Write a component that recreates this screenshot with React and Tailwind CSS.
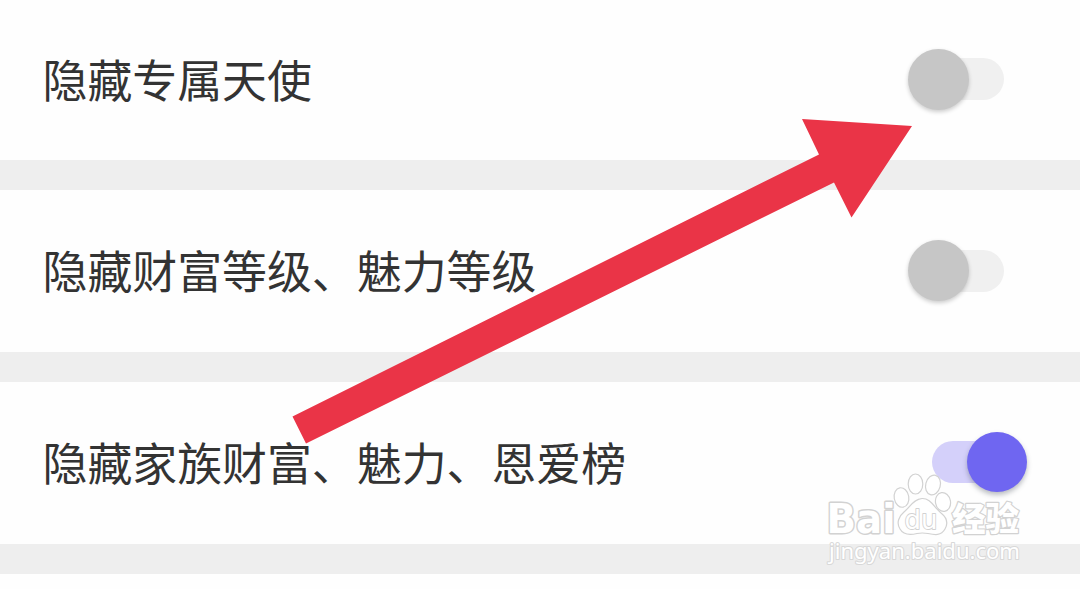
function Toggle({ on }) {
  if (on) {
    return (
      <div className="mr-[53px] flex h-[60px] w-24 items-center justify-end">
        <div className="-mr-[30px] h-[42px] w-[65px] rounded-l-full bg-[#d4d0fa]" />
        <div className="z-10 size-[60px] shrink-0 rounded-full bg-[#6f66f1] shadow-[0_3px_5px_rgba(60,70,80,0.35)]" />
      </div>
    );
  }
  return (
    <div className="mr-[76px] flex h-[60px] w-24 items-center">
      <div className="z-10 size-[61px] shrink-0 rounded-full bg-[#c6c6c6] shadow-[0_2px_4px_rgba(0,0,0,0.2)]" />
      <div className="-ml-[30px] h-[42px] w-[65px] rounded-r-full bg-[#f0f0f0]" />
    </div>
  );
}

function Row({ label, on, className }) {
  return (
    <div className={`flex shrink-0 items-center justify-between pl-[42.5px] ${className}`}>
      <span className="whitespace-nowrap text-[44.9px] leading-none text-[#333333]">{label}</span>
      <Toggle on={on} />
    </div>
  );
}

function Divider() {
  return <div className="h-[30px] shrink-0 bg-[#eeeeee]" />;
}

function Arrow() {
  return (
    <svg className="absolute inset-0 z-20" width="1080" height="589" viewBox="0 0 1080 589">
      <polygon points="292.5,416.5 819,154.5 802,119 912,126 851.5,217.5 834,182.5 306,443.5" fill="#ea3447" />
    </svg>
  );
}

function Watermark() {
  return (
    <svg
      className="absolute left-[820px] top-[465px] z-30"
      width="220"
      height="110"
      viewBox="820 465 220 110"
      fill="#ffffff"
      stroke="#d2d2d2"
      strokeWidth="1.2"
      strokeLinejoin="round"
    >
      <text x="826.5" y="533" fontFamily="'DejaVu Sans', sans-serif" fontWeight="700" fontSize="40" textLength="69" lengthAdjust="spacingAndGlyphs" strokeWidth="3" paintOrder="stroke">Bai</text>
      <g fillOpacity="0.8">
        <ellipse cx="901.5" cy="497.500" rx="7.3" ry="9.8" transform="rotate(-10 901.5 497.5)" />
        <ellipse cx="915.5" cy="484" rx="7.3" ry="10" />
        <ellipse cx="933" cy="485" rx="7.3" ry="10" transform="rotate(15 933 485)" />
        <ellipse cx="943" cy="502" rx="7.5" ry="9.5" transform="rotate(-10 943 502)" />
      </g>
      <path d="M922 498.500C914 499 910 507 904 512C899 516 896 523 900 529C904 536 911 535 917 533.500Q922 532.500 928 533.500C935 535 941 536 945 529C949 522 946 517 941 513C934 507 930 498 922 498.500Z" />
      <text x="904.5" y="529" fontFamily="'DejaVu Sans', sans-serif" fontSize="27" textLength="33" lengthAdjust="spacingAndGlyphs" strokeWidth="1.8" paintOrder="stroke">du</text>
      <text x="952" y="530.5" fontFamily="'Noto Sans CJK SC', sans-serif" fontWeight="900" fontSize="33" textLength="67" lengthAdjust="spacingAndGlyphs" strokeWidth="2.4" paintOrder="stroke">经验</text>
      <text x="829" y="559" fontFamily="'Noto Sans', sans-serif" fontSize="21" textLength="191" lengthAdjust="spacingAndGlyphs" stroke="#d8d8d8" strokeWidth="2" paintOrder="stroke">jingyan.baidu.com</text>
    </svg>
  );
}

export default function App() {
  return (
    <main className="relative flex h-[589px] w-[1080px] flex-col overflow-hidden bg-[#fefefe] font-['Noto_Sans_CJK_SC',sans-serif]">
      <Row label="隐藏专属天使" className="h-40 pb-0.5" />
      <Divider />
      <Row label="隐藏财富等级、魅力等级" className="h-[162px] pb-px" />
      <Divider />
      <Row label="隐藏家族财富、魅力、恩爱榜" on className="h-[162px] pb-0.5" />
      <Divider />
      <Arrow />
      <Watermark />
    </main>
  );
}
